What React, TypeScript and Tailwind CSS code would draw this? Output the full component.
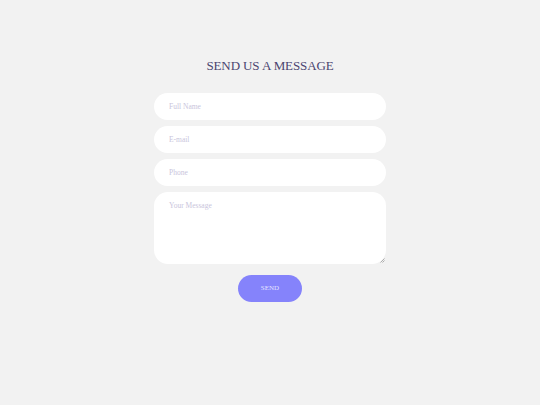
import { useState } from 'react';

export default function App() {
  const [form, setForm] = useState({ name: '', email: '', phone: '', message: '' });

  const update = (key: keyof typeof form) => (e: React.ChangeEvent<HTMLInputElement | HTMLTextAreaElement>) =>
    setForm({ ...form, [key]: e.target.value });

  const inputClass =
    "w-full h-[27px] rounded-full bg-white px-[15px] text-[7.5px] text-[#4b4570] placeholder:text-[#c9c5dc] outline-none border-0";

  return (
    <div
      className="min-h-screen w-full bg-[#f2f2f2] flex flex-col items-center pt-[58px]"
      style={{ fontFamily: '"Liberation Serif", "Times New Roman", serif' }}
    >
      <h2 className="text-[13px] leading-[16px] text-[#4b4570] tracking-[-0.1px]">SEND US A MESSAGE</h2>

      <form
        className="mt-[19px] w-[232px] flex flex-col items-center gap-[6px]"
        onSubmit={(e) => e.preventDefault()}
      >
        <input type="text" placeholder="Full Name" value={form.name} onChange={update('name')} className={inputClass} />
        <input type="email" placeholder="E-mail" value={form.email} onChange={update('email')} className={inputClass} />
        <input type="tel" placeholder="Phone" value={form.phone} onChange={update('phone')} className={inputClass} />
        <div className="relative w-full">
          <textarea
            placeholder="Your Message"
            value={form.message}
            onChange={update('message')}
            className="block w-full h-[72px] resize-none rounded-[14px] bg-white px-[15px] pt-[8px] text-[7.5px] text-[#4b4570] placeholder:text-[#c9c5dc] outline-none border-0"
          />
          {/* resize grip */}
          <svg className="absolute right-[1px] bottom-[1px] w-[5px] h-[5px]" viewBox="0 0 5 5">
            <path d="M0.5 4.5 L4.5 0.5 M2.5 4.5 L4.5 2.5" stroke="#9a9a9a" strokeWidth="0.8" />
          </svg>
        </div>
        <button
          type="submit"
          className="mt-[5px] w-[64px] h-[27px] rounded-full bg-[#8583fb] text-[7px] text-[#e4e4ff]"
        >
          SEND
        </button>
      </form>
    </div>
  );
}
